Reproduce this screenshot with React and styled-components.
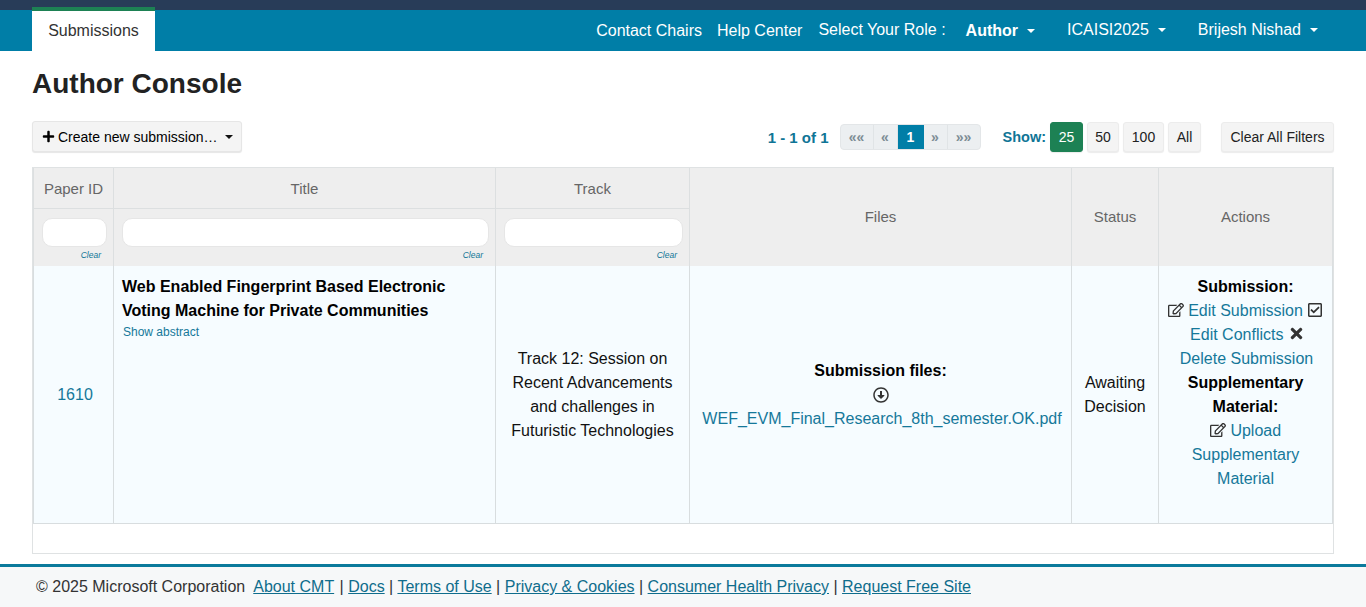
import styled, { createGlobalStyle } from 'styled-components';
import { FaPlus, FaRegEdit, FaRegCheckSquare, FaTimes, FaRegArrowAltCircleDown } from 'react-icons/fa';

const GlobalStyle = createGlobalStyle`
  html, body {
    margin: 0;
    padding: 0;
    background: #fff;
    font-family: "Liberation Sans", Arial, sans-serif;
    font-size: 16px;
    color: #222;
  }
  * { box-sizing: border-box; }
`;

const Page = styled.div`
  height: 607px;
  overflow: hidden;
  display: flex;
  flex-direction: column;
`;

const TopStrip = styled.div`
  height: 10px;
  background: #283c58;
`;

const NavBar = styled.nav`
  height: 41px;
  background: #007ea7;
  padding: 0 32px;
  display: flex;
  justify-content: space-between;
`;

const ActiveTab = styled.a`
  width: 123px;
  height: 44px;
  margin-top: -3px;
  background: #fff;
  border-top: 4px solid #1d8154;
  color: #333;
  display: flex;
  justify-content: center;
  padding-top: 11px;
`;

const NavRight = styled.div`
  display: flex;
  padding: 11px 16px 0 0;
  color: #fff;
  white-space: nowrap;
`;

const NavLink = styled.a`
  margin-left: ${p => p.$gap || 0}px;
  margin-top: ${p => p.$up ? -1 : 0}px;
  font-weight: ${p => p.$bold ? 700 : 400};
  line-height: 18px;
  display: flex;
  align-items: center;
  height: 20px;
`;

const Caret = styled.span`
  display: inline-block;
  margin-left: ${p => p.$gap || 9}px;
  border-top: 4px solid ${p => p.$color || '#fff'};
  border-left: 4px solid transparent;
  border-right: 4px solid transparent;
`;

const Main = styled.main`
  padding: 0 32px;
  flex: 1;
`;

const Title = styled.h1`
  margin: 16px 0 0;
  font-size: 28px;
  line-height: 34px;
  font-weight: 700;
  color: #222;
  height: 34px;
`;

const Toolbar = styled.div`
  margin-top: 20px;
  height: 31px;
  display: flex;
  align-items: flex-start;
`;

const CreateButton = styled.button`
  width: 210px;
  height: 31px;
  padding: 0 0 0 9px;
  border: 1px solid #e6e6e6;
  border-radius: 3px;
  background: #f4f4f4;
  box-shadow: 0 1px 1px rgba(0, 0, 0, 0.1);
  font: 14px "Liberation Sans", Arial, sans-serif;
  color: #000;
  display: flex;
  align-items: center;
  svg { margin-right: 3px; }
`;

const PagerArea = styled.div`
  margin-left: auto;
  display: flex;
  align-items: flex-start;
`;

const RangeLabel = styled.span`
  margin-top: 9px;
  font-size: 15px;
  line-height: 16px;
  font-weight: 700;
  color: #0f7596;
`;

const Pager = styled.div`
  margin: 3px 0 0 11px;
  height: 26px;
  display: flex;
  border: 1px solid #e3e6e8;
  border-radius: 4px;
  background: #eceff1;
  overflow: hidden;
`;

const PageItem = styled.span`
  width: ${p => p.$w}px;
  margin-top: -1px;
  height: 26px;
  display: flex;
  align-items: center;
  justify-content: center;
  font-size: 14px;
  font-weight: 700;
  color: ${p => p.$active ? '#fff' : '#7d8d95'};
  background: ${p => p.$active ? '#007ea7' : 'transparent'};
  border-right: ${p => p.$last || p.$active ? 'none' : '1px solid #e0e4e6'};
`;

const ShowLabel = styled.span`
  margin: 8px 4px 0 22px;
  font-size: 14.5px;
  line-height: 16px;
  font-weight: 700;
  color: #0f7596;
`;

const SizeButton = styled.button`
  width: ${p => p.$w}px;
  height: 30px;
  margin-top: 1px;
  margin-left: ${p => p.$gap ?? 4}px;
  padding: 0;
  border: 1px solid ${p => p.$active ? '#1d8154' : '#ececec'};
  border-radius: 3px;
  background: ${p => p.$active ? '#1d8154' : '#f4f4f4'};
  box-shadow: 0 1px 1px rgba(0, 0, 0, 0.08);
  color: ${p => p.$active ? '#fff' : '#222'};
  font: 14px "Liberation Sans", Arial, sans-serif;
`;

const TableFrame = styled.div`
  margin-top: 15px;
  height: 387px;
  border: 1px solid #dfe2e3;
`;

const Table = styled.table`
  width: 1300px;
  table-layout: fixed;
  border-collapse: separate;
  border-spacing: 0;
`;

const HeadCell = styled.th`
  height: ${p => p.$h || 41}px;
  padding: ${p => p.$noline ? '0 0 2px' : 0};
  background: #eeeeee;
  border-left: 1px solid #dcdfe0;
  border-right: ${p => p.$end ? '1px solid #dcdfe0' : 'none'};
  border-bottom: ${p => p.$noline ? 'none' : '1px solid #dcdfe0'};
  color: #666;
  font-size: 15px;
  font-weight: 400;
  text-align: center;
  vertical-align: middle;
`;

const FilterCell = styled.th`
  height: 57px;
  padding: 9px 6px 0 8px;
  background: #eeeeee;
  border-left: 1px solid #dcdfe0;
  vertical-align: top;
`;

const FilterInput = styled.input`
  display: block;
  width: 100%;
  height: 29px;
  border: 1px solid #e6e6e6;
  border-radius: 10px;
  background: #fff;
  outline: none;
`;

const ClearLink = styled.a`
  display: block;
  margin-top: 2px;
  padding-right: 6px;
  text-align: right;
  font-size: 8.5px;
  line-height: 12px;
  font-style: italic;
  font-weight: 400;
  color: #0f7596;
`;

const BodyRow = styled.tr`
  height: 258px;
`;

const Cell = styled.td`
  padding: ${p => p.$top ? '9px 8px' : '8px'};
  background: #f6fcff;
  border-left: 1px solid #d8dddf;
  border-right: ${p => p.$end ? '1px solid #d8dddf' : 'none'};
  border-bottom: 1px solid #d8dddf;
  line-height: 24px;
  font-size: 16px;
  color: #111;
  text-align: ${p => p.$left ? 'left' : 'center'};
  vertical-align: ${p => p.$top ? 'top' : 'middle'};
`;

const IdCell = styled(Cell)`
  padding-left: 11px;
`;

const Link = styled.a`
  color: #15789a;
`;

const FileLink = styled(Link)`
  padding-left: 3px;
`;

const PaperTitle = styled.div`
  font-weight: 700;
  color: #000;
`;

const SmallLink = styled.a`
  display: block;
  padding-left: 1px;
  font-size: 12px;
  line-height: 18px;
  color: #15789a;
`;

const Strong = styled.div`
  font-weight: 700;
  color: #000;
`;

const ActionsCell = styled(Cell)`
  padding: 9px 6px;
  svg {
    vertical-align: -2px;
    color: #333;
  }
`;

const ActionLine = styled.div`
  white-space: nowrap;
  padding-left: ${p => p.$nudge || 0}px;
`;

const DownIcon = styled.div`
  height: 24px;
  display: flex;
  align-items: center;
  justify-content: center;
  color: #333;
`;

const Footer = styled.footer`
  height: 43px;
  border-top: 3px solid #0b7a9c;
  background: #f6f8f9;
  padding: 10px 0 0 36px;
  font-size: 16px;
  line-height: 20px;
  color: #333;
  white-space: pre;
`;

const FooterLink = styled.a`
  color: #0f6d8c;
  text-decoration: underline;
`;

const FooterLinks = styled.span`
  margin-left: 1px;
`;

const footerLinks = ['Docs', 'Terms of Use', 'Privacy & Cookies', 'Consumer Health Privacy', 'Request Free Site'];

export default function App() {
  return (
    <Page>
      <GlobalStyle />
      <TopStrip />
      <NavBar>
        <ActiveTab>Submissions</ActiveTab>
        <NavRight>
          <NavLink>Contact Chairs</NavLink>
          <NavLink $gap={15}>Help Center</NavLink>
          <NavLink $gap={16} $up>Select Your Role :</NavLink>
          <NavLink $gap={20} $bold>Author<Caret /></NavLink>
          <NavLink $gap={32} $up>ICAISI2025<Caret /></NavLink>
          <NavLink $gap={32} $up>Brijesh Nishad<Caret /></NavLink>
        </NavRight>
      </NavBar>
      <Main>
        <Title>Author Console</Title>
        <Toolbar>
          <CreateButton>
            <FaPlus size={13} />Create new submission…<Caret $color="#111" $gap={7} />
          </CreateButton>
          <PagerArea>
            <RangeLabel>1 - 1 of 1</RangeLabel>
            <Pager>
              <PageItem $w={33}>««</PageItem>
              <PageItem $w={24}>«</PageItem>
              <PageItem $w={26} $active>1</PageItem>
              <PageItem $w={24}>»</PageItem>
              <PageItem $w={32} $last>»»</PageItem>
            </Pager>
            <ShowLabel>Show:</ShowLabel>
            <SizeButton $w={33} $active $gap={0}>25</SizeButton>
            <SizeButton $w={32}>50</SizeButton>
            <SizeButton $w={41}>100</SizeButton>
            <SizeButton $w={33}>All</SizeButton>
            <SizeButton $w={113} $gap={20}>Clear All Filters</SizeButton>
          </PagerArea>
        </Toolbar>
        <TableFrame>
          <Table>
            <colgroup>
              <col style={{ width: 80 }} />
              <col style={{ width: 382 }} />
              <col style={{ width: 194 }} />
              <col style={{ width: 382 }} />
              <col style={{ width: 87 }} />
              <col style={{ width: 175 }} />
            </colgroup>
            <thead>
              <tr>
                <HeadCell>Paper ID</HeadCell>
                <HeadCell>Title</HeadCell>
                <HeadCell>Track</HeadCell>
                <HeadCell rowSpan={2} $h={98} $noline>Files</HeadCell>
                <HeadCell rowSpan={2} $h={98} $noline>Status</HeadCell>
                <HeadCell rowSpan={2} $h={98} $noline $end>Actions</HeadCell>
              </tr>
              <tr>
                <FilterCell><FilterInput /><ClearLink>Clear</ClearLink></FilterCell>
                <FilterCell><FilterInput /><ClearLink>Clear</ClearLink></FilterCell>
                <FilterCell><FilterInput /><ClearLink>Clear</ClearLink></FilterCell>
              </tr>
            </thead>
            <tbody>
              <BodyRow>
                <IdCell><Link>1610</Link></IdCell>
                <Cell $top $left>
                  <PaperTitle>Web Enabled Fingerprint Based Electronic Voting Machine for Private Communities</PaperTitle>
                  <SmallLink>Show abstract</SmallLink>
                </Cell>
                <Cell>Track 12: Session on Recent Advancements and challenges in Futuristic Technologies</Cell>
                <Cell>
                  <Strong>Submission files:</Strong>
                  <DownIcon><FaRegArrowAltCircleDown size={16} /></DownIcon>
                  <FileLink>WEF_EVM_Final_Research_8th_semester.OK.pdf</FileLink>
                </Cell>
                <Cell>Awaiting Decision</Cell>
                <ActionsCell $top $end>
                  <Strong>Submission:</Strong>
                  <ActionLine><FaRegEdit size={16} /> <Link>Edit Submission</Link> <FaRegCheckSquare size={16} /></ActionLine>
                  <ActionLine $nudge={4}><Link>Edit Conflicts</Link> <FaTimes size={17} /></ActionLine>
                  <ActionLine $nudge={2}><Link>Delete Submission</Link></ActionLine>
                  <Strong>Supplementary Material:</Strong>
                  <FaRegEdit size={16} /> <Link>Upload Supplementary Material</Link>
                </ActionsCell>
              </BodyRow>
            </tbody>
          </Table>
        </TableFrame>
      </Main>
      <Footer>
        © 2025 Microsoft Corporation  <FooterLink>About CMT</FooterLink>
        <FooterLinks>
          {footerLinks.map(name => (
            <span key={name}> | <FooterLink>{name}</FooterLink></span>
          ))}
        </FooterLinks>
      </Footer>
    </Page>
  );
}
